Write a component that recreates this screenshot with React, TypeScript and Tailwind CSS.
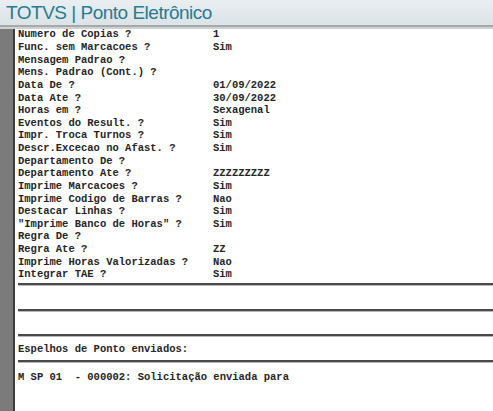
import React from "react";

const params: [string, string][] = [
  ["Numero de Copias ?", "1"],
  ["Func. sem Marcacoes ?", "Sim"],
  ["Mensagem Padrao ?", ""],
  ["Mens. Padrao (Cont.) ?", ""],
  ["Data De ?", "01/09/2022"],
  ["Data Ate ?", "30/09/2022"],
  ["Horas em ?", "Sexagenal"],
  ["Eventos do Result. ?", "Sim"],
  ["Impr. Troca Turnos ?", "Sim"],
  ["Descr.Excecao no Afast. ?", "Sim"],
  ["Departamento De ?", ""],
  ["Departamento Ate ?", "ZZZZZZZZZ"],
  ["Imprime Marcacoes ?", "Sim"],
  ["Imprime Codigo de Barras ?", "Nao"],
  ["Destacar Linhas ?", "Sim"],
  ['"Imprime Banco de Horas" ?', "Sim"],
  ["Regra De ?", ""],
  ["Regra Ate ?", "ZZ"],
  ["Imprime Horas Valorizadas ?", "Nao"],
  ["Integrar TAE ?", "Sim"],
];

const mono = { fontFamily: '"Liberation Mono", "Courier New", monospace' };

function Rule() {
  return (
    <div className="flex flex-col">
      <div className="h-[2px] bg-[#4a4a4a]" />
      <div className="h-px bg-[#b8b8b8]" />
    </div>
  );
}

export default function App() {
  return (
    <div className="w-[493px] h-[411px] overflow-hidden bg-white flex flex-col">
      <div className="h-[25px] bg-gradient-to-b from-[#e9eff1] to-[#dbe3e6] flex items-center pl-[6px]">
        <span
          className="text-[19px] leading-none tracking-[-0.5px] text-[#2a7a90]"
          style={{ fontFamily: '"Liberation Sans", Arial, sans-serif' }}
        >
          TOTVS | Ponto Eletrônico
        </span>
      </div>
      <div className="h-[2px] bg-[#a6a9aa]" />
      <div className="h-[2px] bg-[#cfd2d3]" />
      <div className="flex flex-1">
        <div className="w-[13px] bg-[#7b7b7b]" />
        <div className="w-[2px] bg-[#3c3c3c]" />
        <div
          className="flex-1 flex flex-col pl-[3px] text-[10.5px] font-bold text-[#262626]"
          style={mono}
        >
          <div className="flex flex-col">
            {params.map(([label, value]) => (
              <div key={label} className="flex h-[12.63px] items-center whitespace-pre">
                <span className="w-[195px] shrink-0">{label}</span>
                <span>{value}</span>
              </div>
            ))}
          </div>
          <div className="h-[1.5px]" />
          <Rule />
          <div className="h-[23px]" />
          <Rule />
          <div className="h-[22px]" />
          <Rule />
          <div className="h-[23px] flex items-end pb-[2px]">Espelhos de Ponto enviados:</div>
          <Rule />
          <div className="h-[30px] flex items-center whitespace-pre">
            M SP 01  - 000002: Solicitação enviada para
          </div>
        </div>
      </div>
    </div>
  );
}
